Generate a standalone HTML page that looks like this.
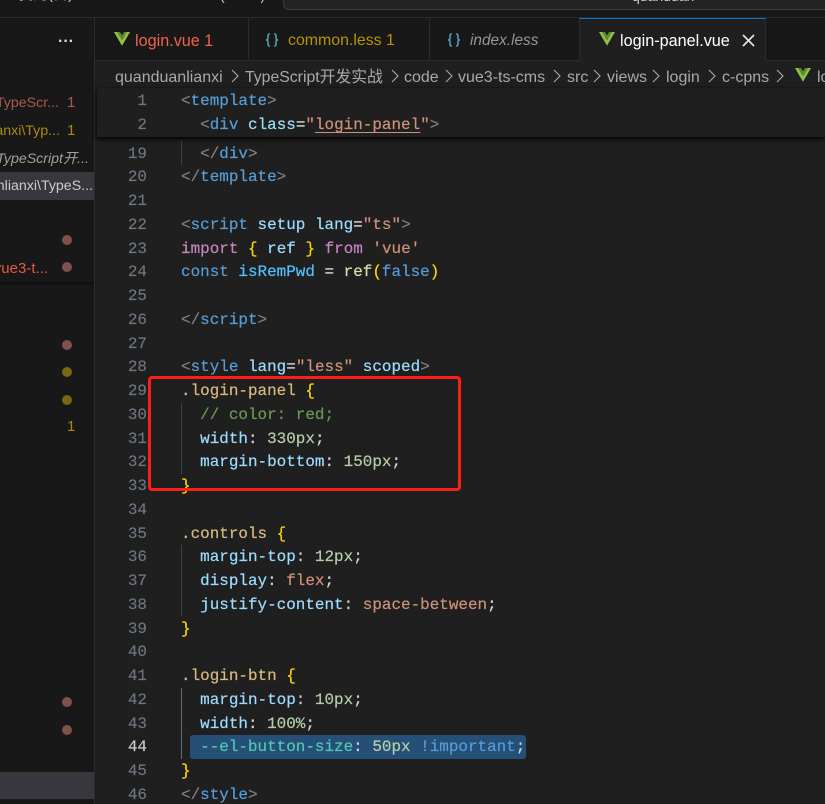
<!DOCTYPE html>
<html><head><meta charset="utf-8">
<style>
html,body{margin:0;padding:0;background:#1f1f1f;}
#r{position:relative;width:825px;height:804px;overflow:hidden;background:#1f1f1f;font-family:"Liberation Sans","Noto Sans CJK SC",sans-serif;}
.a{position:absolute;white-space:pre;}
.l{position:absolute;left:181px;height:24px;line-height:24px;white-space:pre;font-family:"Liberation Mono","Noto Sans CJK SC",monospace;font-size:15.95px;color:#d4d4d4;-webkit-text-stroke:0.2px currentColor;}
.n{position:absolute;left:110px;width:37px;text-align:right;height:24px;line-height:24px;font-family:"Liberation Mono",monospace;font-size:15.95px;color:#6e7681;-webkit-text-stroke:0.15px currentColor;}
.g{color:#808080}.t{color:#569cd6}.at{color:#9cdcfe}.s{color:#ce9178}.c{color:#6a9955}.y{color:#ffd700}.k{color:#c586c0}.v{color:#9cdcfe}.sel{color:#d7ba7d}.num{color:#b5cea8}.f{color:#dcdcaa}.b{color:#569cd6}.e{color:#4ec9b0}
.side{font-size:14.2px;height:22px;line-height:22px;}
.dot{position:absolute;left:62px;width:10px;height:10px;border-radius:50%;}
.ig{position:absolute;width:1px;background:#404040;}
.bc{position:absolute;top:66.5px;height:22px;line-height:22px;font-size:16px;color:#a9a9a9;white-space:pre;}
.tb{position:absolute;top:30px;font-size:16.2px;line-height:22px;white-space:pre;}
</style></head><body><div id="r">
<!-- title bar -->
<div class="a" style="left:0;top:0;width:825px;height:17px;background:#181818;border-bottom:1px solid #2b2b2b;"></div>
<div class="a" style="left:18px;top:-16px;font-size:15px;line-height:22px;color:#ccc;">我的(目)</div>
<div class="a" style="left:220px;top:-16px;font-size:14px;line-height:22px;color:#ccc;">( ←→ )</div>
<div class="a" style="left:283px;top:-10px;width:560px;height:18px;background:#242424;border:1px solid #3c3c3c;border-radius:6px;"></div>
<div class="a" style="left:632px;top:-15px;font-size:14px;line-height:22px;color:#ccc;">quanduan</div>
<!-- sidebar -->
<div class="a" style="left:0;top:18px;width:94px;height:786px;background:#181818;border-right:1px solid #2b2b2b;"></div>
<div class="a" style="left:58px;top:34px;font-size:16px;line-height:16px;color:#ddd;font-weight:bold;">···</div>
<div class="a side" style="right:766px;top:92px;color:#a85a4c;">TypeScr...</div>
<div class="a side" style="left:67px;top:92px;color:#a85a4c;font-size:15px;">1</div>
<div class="a side" style="right:765px;top:120px;color:#a98a10;">anxi\Typ...</div>
<div class="a side" style="left:67px;top:120px;color:#a98a10;font-size:15px;">1</div>
<div class="a side" style="right:736px;top:148px;color:#a0a0a0;font-style:italic;">TypeScript开...</div>
<div class="a" style="left:0;top:172px;width:94px;height:28px;background:#37373d;"></div>
<div class="a side" style="right:732px;top:175px;color:#ccc;">nlianxi\TypeS...</div>
<div class="a side" style="right:777px;top:258px;color:#e05a44;font-size:15px;">vue3-t...</div>
<div class="a" style="left:0;top:282px;width:94px;height:3px;background:#111;"></div>
<div class="dot" style="top:235px;background:#80504a;"></div>
<div class="dot" style="top:262px;background:#80504a;"></div>
<div class="dot" style="top:340px;background:#80504a;"></div>
<div class="dot" style="top:367px;background:#7a6614;"></div>
<div class="dot" style="top:395px;background:#7a6614;"></div>
<div class="a side" style="left:67px;top:416px;color:#a98a10;font-size:15px;">1</div>
<div class="dot" style="top:697px;background:#80504a;"></div>
<div class="dot" style="top:725px;background:#80504a;"></div>
<div class="a" style="left:0;top:772px;width:94px;height:27px;background:#37373d;"></div>
<!-- tab bar -->
<div class="a" style="left:95px;top:18px;width:730px;height:42px;background:#181818;border-bottom:1px solid #2b2b2b;"></div>
<div class="a" style="left:95px;top:18px;width:153px;height:42px;background:#181818;border-right:1px solid #2b2b2b;"></div>
<div class="a" style="left:248px;top:18px;width:181px;height:42px;border-right:1px solid #2b2b2b;"></div>
<div class="a" style="left:579px;top:18px;height:43px;width:187px;background:#1f1f1f;border-top:1px solid #0078d4;box-sizing:border-box;border-left:1px solid #2b2b2b;border-right:1px solid #2b2b2b;"></div>
<svg class="a" style="left:114px;top:32px" width="16" height="14" viewBox="0 0 16 14"><path d="M0 0H3.2L8 8.2L12.8 0H16L8 13.8Z" fill="#8dc149"/><path d="M3.2 0H6L8 3.4L10 0H12.8L8 8.2Z" fill="#5f8a2e"/></svg>
<div class="tb" style="left:135px;color:#f0624c;">login.vue 1</div>
<svg class="a" style="left:265px;top:33px" width="14" height="14" viewBox="0 0 14 14" fill="none" stroke="#519aba" stroke-width="1.6"><path d="M5 1C3 1 3 2 3 4V5.5C3 6.5 2 7 1 7C2 7 3 7.5 3 8.5V10C3 12 3 13 5 13"/><path d="M9 1C11 1 11 2 11 4V5.5C11 6.5 12 7 13 7C12 7 11 7.5 11 8.5V10C11 12 11 13 9 13"/></svg>
<div class="tb" style="left:288px;color:#b89500;font-size:15.9px;">common.less 1</div>
<svg class="a" style="left:447px;top:33px" width="14" height="14" viewBox="0 0 14 14" fill="none" stroke="#519aba" stroke-width="1.6"><path d="M5 1C3 1 3 2 3 4V5.5C3 6.5 2 7 1 7C2 7 3 7.5 3 8.5V10C3 12 3 13 5 13"/><path d="M9 1C11 1 11 2 11 4V5.5C11 6.5 12 7 13 7C12 7 11 7.5 11 8.5V10C11 12 11 13 9 13"/></svg>
<div class="tb" style="left:470px;color:#969696;font-style:italic;font-size:15.4px;">index.less</div>
<svg class="a" style="left:599px;top:32px" width="16" height="14" viewBox="0 0 16 14"><path d="M0 0H3.2L8 8.2L12.8 0H16L8 13.8Z" fill="#8dc149"/><path d="M3.2 0H6L8 3.4L10 0H12.8L8 8.2Z" fill="#5f8a2e"/></svg>
<div class="tb" style="left:620px;color:#fff;">login-panel.vue</div>
<svg class="a" style="left:742px;top:34px" width="13" height="13" viewBox="0 0 13 13"><path d="M1 1L12 12M12 1L1 12" stroke="#e8e8e8" stroke-width="1.6" fill="none"/></svg>
<!-- breadcrumbs -->
<div class="bc" style="left:115px;">quanduanlianxi</div>
<div class="bc" style="left:245px;font-size:15.8px;">TypeScript开发实战</div>
<div class="bc" style="left:404px;">code</div>
<div class="bc" style="left:458px;">vue3-ts-cms</div>
<div class="bc" style="left:567px;">src</div>
<div class="bc" style="left:607px;">views</div>
<div class="bc" style="left:666px;">login</div>
<div class="bc" style="left:722px;">c-cpns</div>
<div class="bc" style="left:817px;">lo</div>
<svg class="a" style="left:0;top:66px" width="825" height="22" viewBox="0 0 825 22" fill="none" stroke="#a9a9a9" stroke-width="1.1"><path d="M232 4L238 10L232 16M392 4L398 10L392 16M446 4L452 10L446 16M554 4L560 10L554 16M594 4L600 10L594 16M653 4L659 10L653 16M709 4L715 10L709 16M777 4L783 10L777 16"/></svg>
<svg class="a" style="left:795px;top:68px" width="16" height="14" viewBox="0 0 16 14"><path d="M0 0H3.2L8 8.2L12.8 0H16L8 13.8Z" fill="#8dc149"/><path d="M3.2 0H6L8 3.4L10 0H12.8L8 8.2Z" fill="#5f8a2e"/></svg>
<!-- indent guides -->
<div class="ig" style="left:181px;top:140px;height:25px;"></div>
<div class="ig" style="left:181px;top:403px;height:71px;"></div>
<div class="ig" style="left:181px;top:545px;height:71px;"></div>
<div class="ig" style="left:181px;top:688px;height:71px;background:#6a6a6a;"></div>
<!-- selection -->
<div class="a" style="left:190px;top:735px;width:336px;height:24px;background:#264f78;border-radius:3px;"></div>
<!-- line numbers -->
<div class="n" style="top:142px">19</div><div class="n" style="top:165px">20</div><div class="n" style="top:189px">21</div><div class="n" style="top:213px">22</div><div class="n" style="top:237px">23</div><div class="n" style="top:260px">24</div><div class="n" style="top:284px">25</div><div class="n" style="top:308px">26</div><div class="n" style="top:332px">27</div><div class="n" style="top:355px">28</div><div class="n" style="top:379px">29</div><div class="n" style="top:403px">30</div><div class="n" style="top:427px">31</div><div class="n" style="top:450px">32</div><div class="n" style="top:474px">33</div><div class="n" style="top:498px">34</div><div class="n" style="top:522px">35</div><div class="n" style="top:545px">36</div><div class="n" style="top:569px">37</div><div class="n" style="top:593px">38</div><div class="n" style="top:617px">39</div><div class="n" style="top:640px">40</div><div class="n" style="top:664px">41</div><div class="n" style="top:688px">42</div><div class="n" style="top:712px">43</div><div class="n" style="top:735px;color:#ccc">44</div><div class="n" style="top:759px">45</div><div class="n" style="top:783px">46</div>
<!-- code -->
<div class="l" style="top:142px">  <span class="g">&lt;/</span><span class="t">div</span><span class="g">&gt;</span></div>
<div class="l" style="top:165px"><span class="g">&lt;/</span><span class="t">template</span><span class="g">&gt;</span></div>
<div class="l" style="top:213px"><span class="g">&lt;</span><span class="t">script</span> <span class="at">setup</span> <span class="at">lang</span>=<span class="s">"ts"</span><span class="g">&gt;</span></div>
<div class="l" style="top:237px"><span class="k">import</span> <span class="y">{</span> <span class="v">ref</span> <span class="y">}</span> <span class="k">from</span> <span class="s">'vue'</span></div>
<div class="l" style="top:260px"><span class="t">const</span> <span style="color:#4fc1ff">isRemPwd</span> = <span class="f">ref</span><span class="y">(</span><span class="t">false</span><span class="y">)</span></div>
<div class="l" style="top:308px"><span class="g">&lt;/</span><span class="t">script</span><span class="g">&gt;</span></div>
<div class="l" style="top:355px"><span class="g">&lt;</span><span class="t">style</span> <span class="at">lang</span>=<span class="s">"less"</span> <span class="at">scoped</span><span class="g">&gt;</span></div>
<div class="l" style="top:379px"><span class="sel">.login-panel</span> <span class="y">{</span></div>
<div class="l" style="top:403px">  <span class="c">// color: red;</span></div>
<div class="l" style="top:427px">  <span class="v">width</span>: <span class="num">330px</span>;</div>
<div class="l" style="top:450px">  <span class="v">margin-bottom</span>: <span class="num">150px</span>;</div>
<div class="l" style="top:474px"><span class="y">}</span></div>
<div class="l" style="top:522px"><span class="sel">.controls</span> <span class="y">{</span></div>
<div class="l" style="top:545px">  <span class="v">margin-top</span>: <span class="num">12px</span>;</div>
<div class="l" style="top:569px">  <span class="v">display</span>: <span class="s">flex</span>;</div>
<div class="l" style="top:593px">  <span class="v">justify-content</span>: <span class="s">space-between</span>;</div>
<div class="l" style="top:617px"><span class="y">}</span></div>
<div class="l" style="top:664px"><span class="sel">.login-btn</span> <span class="y">{</span></div>
<div class="l" style="top:688px">  <span class="v">margin-top</span>: <span class="num">10px</span>;</div>
<div class="l" style="top:712px">  <span class="v">width</span>: <span class="num">100%</span>;</div>
<div class="l" style="top:735px">  <span class="e">--el-button-size</span>: <span class="num">50px</span> <span class="b">!important</span>;</div>
<div class="l" style="top:759px"><span class="y">}</span></div>
<div class="l" style="top:783px"><span class="g">&lt;/</span><span class="t">style</span><span class="g">&gt;</span></div>
<!-- sticky scroll -->
<div class="a" style="left:97px;top:88px;width:728px;height:49px;background:#1f1f1f;box-shadow:0 2px 5px #000;"></div>
<div class="n" style="top:89px">1</div><div class="n" style="top:113px">2</div>
<div class="l" style="top:89px"><span class="g">&lt;</span><span class="t">template</span><span class="g">&gt;</span></div>
<div class="l" style="top:113px">  <span class="g">&lt;</span><span class="t">div</span> <span class="at">class</span>=<span class="s">"<span style="text-decoration:underline;text-underline-offset:3px">login-panel</span>"</span><span class="g">&gt;</span></div>
<!-- red highlight -->
<div class="a" style="left:148px;top:376px;width:313px;height:115px;box-sizing:border-box;border:3.5px solid #fb1f17;border-radius:4px;"></div>
</div></body></html>
